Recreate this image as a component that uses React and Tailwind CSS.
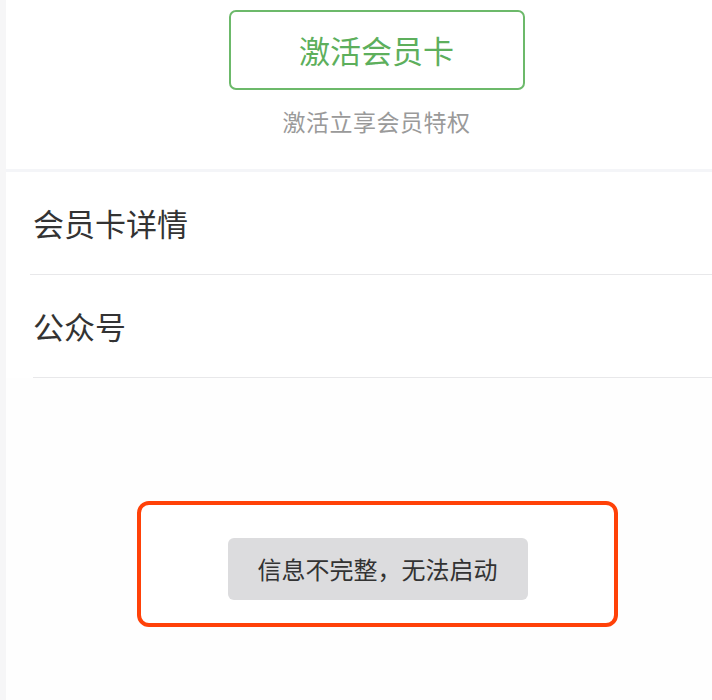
export default function App() {
	const font = { fontFamily: '"Noto Sans CJK SC", "Noto Sans", sans-serif' }
	return (
		<div className="flex h-[700px] w-[712px] overflow-hidden bg-[#fefefe]" style={font}>
			<div className="w-[6px] shrink-0 bg-[#f6f6f7]" />
			<div className="flex flex-1 flex-col">
				<div className="flex h-[169px] flex-col items-center bg-white pt-[10px] pl-[35px]">
					<button className="flex h-[80px] w-[296px] items-center justify-center rounded-[7px] border-2 border-[#6cb96a] text-[31px] text-[#5daf5c]">
						激活会员卡
					</button>
					<p className="mt-[14px] text-[23px] tracking-[0.5px] text-[#9a9a9a]">激活立享会员特权</p>
				</div>
				<div className="h-[3px] bg-[#f4f5f8]" />
				<div className="bg-white">
					<div className="ml-[24px] flex h-[103px] items-center border-b border-[#e8e8ea] pl-[3px] text-[31px] text-[#333]">
						会员卡详情
					</div>
					<div className="ml-[27px] flex h-[103px] items-center border-b border-[#e8e8ea] text-[31px] text-[#333]">
						公众号
					</div>
				</div>
				<div className="ml-[131px] mt-[123px] flex h-[126px] w-[481px] items-center justify-center rounded-[12px] border-4 border-[#ff4108] bg-white pt-[9px]">
					<div className="flex h-[62px] w-[300px] items-center justify-center rounded-[6px] bg-[#dcdcde] text-[24px] text-[#333]">
						信息不完整，无法启动
					</div>
				</div>
			</div>
		</div>
	)
}
